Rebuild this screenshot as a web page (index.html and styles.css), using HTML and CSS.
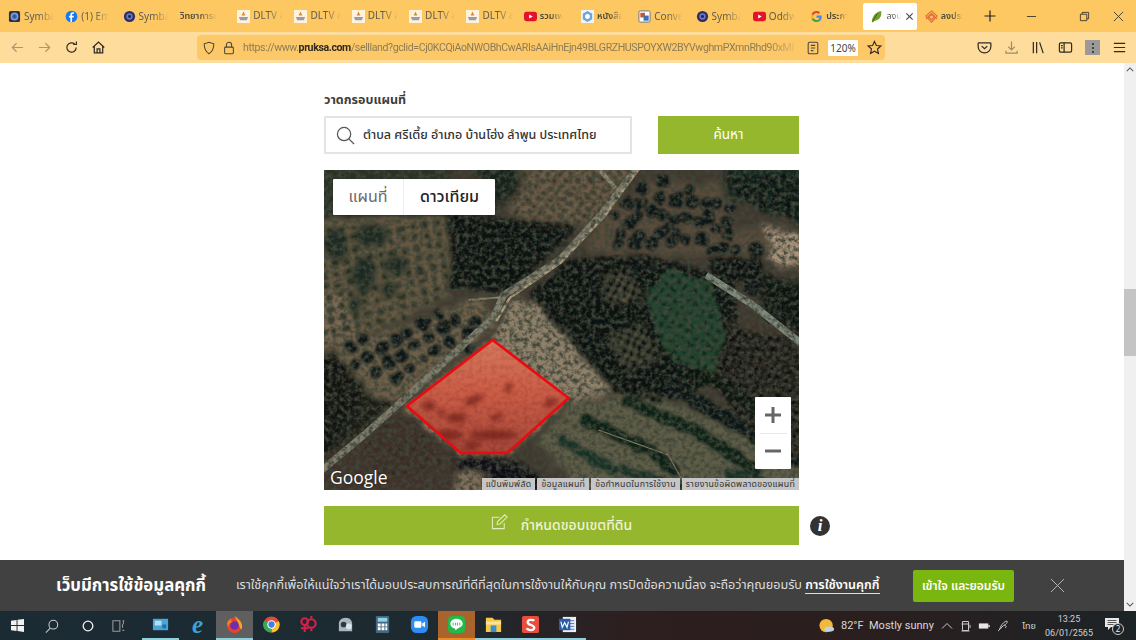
FILE: index.html
```html
<!DOCTYPE html>
<html lang="th">
<head>
<meta charset="utf-8">
<title>ลงประกาศขายที่ดิน</title>
<link rel="stylesheet" href="styles.css">
</head>
<body>
<svg class="defs" width="0" height="0" aria-hidden="true">
  <defs>
    <symbol id="i-symbol" viewBox="0 0 14 14"><rect x="1" y="1" width="12" height="12" rx="2" fill="#26324f"/><circle cx="7" cy="7" r="4.2" fill="#7f9bd8"/><circle cx="7" cy="7" r="2.4" fill="#3d5796"/></symbol>
    <symbol id="i-dark" viewBox="0 0 14 14"><circle cx="7" cy="7" r="6" fill="#2b2f63"/><circle cx="7" cy="7" r="3.4" fill="#6f76c4"/><circle cx="7" cy="7" r="1.6" fill="#1d2150"/></symbol>
    <symbol id="i-dltv" viewBox="0 0 14 14"><rect width="14" height="14" fill="#fff3dc"/><path d="M7 1.5 9 6H5z" fill="#d9883c"/><path d="M2 7.5h10L10.5 11h-7z" fill="#9c9ab0"/></symbol>
    <symbol id="i-yt" viewBox="0 0 14 14"><rect y="2" width="14" height="10" rx="2.6" fill="#e2132a"/><path d="M5.6 4.8 9.4 7l-3.8 2.2z" fill="#fff"/></symbol>
  </defs>
</svg>

<div class="app">
  <header class="tabbar">
    <div class="tab"><svg class="fav"><use href="#i-symbol"/></svg><span class="tab-label">Symba</span></div>
    <div class="tab"><svg class="fav" viewBox="0 0 14 14"><circle cx="7" cy="7" r="6.3" fill="#1877f2"/><path d="M7.6 13V8h1.6l.3-1.9H7.6V5c0-.6.3-1 1-1h1V2.400C9.300 2.300 8.800 2.300 8.300 2.300 6.800 2.300 5.800 3.200 5.800 4.800v1.300H4.200V8h1.600v5z" fill="#fff"/></svg><span class="tab-label">(1) Em</span></div>
    <div class="tab"><svg class="fav"><use href="#i-dark"/></svg><span class="tab-label">Symba</span></div>
    <div class="tab"><span class="tab-label tab-label-thai">วิทยาการค</span></div>
    <div class="tab"><svg class="fav"><use href="#i-dltv"/></svg><span class="tab-label">DLTV ส</span></div>
    <div class="tab"><svg class="fav"><use href="#i-dltv"/></svg><span class="tab-label">DLTV ส</span></div>
    <div class="tab"><svg class="fav"><use href="#i-dltv"/></svg><span class="tab-label">DLTV ส</span></div>
    <div class="tab"><svg class="fav"><use href="#i-dltv"/></svg><span class="tab-label">DLTV ส</span></div>
    <div class="tab"><svg class="fav"><use href="#i-dltv"/></svg><span class="tab-label">DLTV ส</span></div>
    <div class="tab"><svg class="fav"><use href="#i-yt"/></svg><span class="tab-label tab-label-thai">รวมเพ</span></div>
    <div class="tab"><svg class="fav" viewBox="0 0 14 14"><rect width="14" height="14" fill="#eef3fb"/><path d="M7 1 12 4v6l-5 3-5-3V4z" fill="#6ea2d8"/><path d="M7 4 9.500 5.500v3L7 10 4.500 8.500v-3z" fill="#fff"/></svg><span class="tab-label tab-label-thai">หนังสือ</span></div>
    <div class="tab"><svg class="fav" viewBox="0 0 14 14"><rect x="1" y="1" width="12" height="12" rx="1.500" fill="#fff" stroke="#5c6f8f"/><rect x="2.500" y="3" width="5" height="5" fill="#c2553c"/><rect x="6" y="6" width="5.500" height="5.500" fill="#3f6fb0"/></svg><span class="tab-label">Conve</span></div>
    <div class="tab"><svg class="fav"><use href="#i-dark"/></svg><span class="tab-label">Symba</span></div>
    <div class="tab"><svg class="fav"><use href="#i-yt"/></svg><span class="tab-label">Oddw</span></div>
    <div class="tab"><svg class="fav" viewBox="0 0 14 14"><path d="M12.600 7.200c0-.5 0-.9-.1-1.300H7v2.500h3.200a2.800 2.800 0 0 1-1.200 1.800l1.900 1.500c1.100-1 1.700-2.500 1.700-4.500z" fill="#4285f4"/><path d="M7 13c1.600 0 2.900-.5 3.900-1.400L9 10.200c-.5.4-1.200.6-2 .6-1.500 0-2.800-1-3.300-2.400l-2 1.500C2.700 11.800 4.700 13 7 13z" fill="#34a853"/><path d="M3.700 8.400a3.700 3.700 0 0 1 0-2.400l-2-1.600a6 6 0 0 0 0 5.500z" fill="#fbbc05"/><path d="M7 3.300c.9 0 1.600.3 2.200.9l1.700-1.700A5.900 5.900 0 0 0 1.700 4.400l2 1.600C4.200 4.400 5.500 3.300 7 3.300z" fill="#ea4335"/></svg><span class="tab-label tab-label-thai">ประกา</span></div>
    <div class="tab tab-active"><svg class="fav" viewBox="0 0 14 14"><path d="M2 13C2 7 6 2 12 1c1 6-2 10-7 10.500L3 13.500z" fill="#6f9e2b"/><path d="M8 4 3 12" stroke="#2f5a13" stroke-width=".9"/></svg><span class="tab-label tab-label-thai">ลงป</span><svg class="tab-close" viewBox="0 0 10 10"><path d="M1.500 1.500 8.500 8.500M8.500 1.500 1.500 8.500"/></svg></div>
    <div class="tab"><svg class="fav" viewBox="0 0 14 14" fill="none" stroke="#e2693a" stroke-width="1.200"><path d="M7 1 13 6.500 7 13 1 6.500z"/><path d="M7 3.800 10.500 7 7 10.500 3.500 7z"/><path d="M1 9.500 7 5l6 4.500"/></svg><span class="tab-label tab-label-thai">ลงประ</span></div>
    <svg class="new-tab" viewBox="0 0 12 12"><path d="M6 .5v11M.5 6h11"/></svg>
    <div class="win-controls">
      <svg class="win-btn win-min" viewBox="0 0 12 12"><path d="M1 6h10"/></svg>
      <svg class="win-btn win-max" viewBox="0 0 12 12"><path d="M1.500 3.500h7v7h-7zM3.500 3.500v-2h7v7h-2"/></svg>
      <svg class="win-btn" viewBox="0 0 12 12"><path d="M1 1l10 10M11 1 1 11"/></svg>
    </div>
  </header>

  <nav class="toolbar">
    <div class="nav-buttons">
      <svg class="tool tool-faded" viewBox="0 0 16 16"><path d="M14 8H2.500M7 3.500 2.500 8 7 12.500"/></svg>
      <svg class="tool tool-faded" viewBox="0 0 16 16"><path d="M2 8h11.500M9 3.500 13.500 8 9 12.500"/></svg>
      <svg class="tool" viewBox="0 0 16 16"><path d="M13 8a5 5 0 1 1-1.600-3.700M13.200 1.500v3.300H9.900"/></svg>
      <svg class="tool" viewBox="0 0 16 16"><path d="M1.800 8 8 2.200 14.200 8M3.500 7v6.800h9V7M6.500 13.800V9.500h3v4.300"/></svg>
    </div>
    <div class="urlbar">
      <svg class="url-icon" viewBox="0 0 16 16"><path d="M8 1.500 13.500 3.200c0 5-1.500 9-5.500 11.300C4 12.200 2.500 8.200 2.500 3.200z"/></svg>
      <svg class="url-icon url-lock" viewBox="0 0 16 16"><rect x="3" y="7" width="10" height="7.500" rx="1"/><path d="M5 7V4.500a3 3 0 0 1 6 0V7"/></svg>
      <div class="url-text"><span>https://www.</span><b>pruksa.com</b><span>/sellland?gclid=Cj0KCQiAoNWOBhCwARIsAAiHnEjn49BLGRZHUSPOYXW2BYVwghmPXmnRhd90xMI</span></div>
      <svg class="url-icon url-reader" viewBox="0 0 16 16"><rect x="2.500" y="1.500" width="11" height="13" rx="1.500"/><path d="M5.500 5h5M5.500 8h5M5.500 11h3"/></svg>
      <span class="zoom-badge">120%</span>
      <svg class="url-icon url-star" viewBox="0 0 16 16"><path d="M8 1.500 10 5.900l4.700.5-3.500 3.200 1 4.700L8 11.900l-4.200 2.400 1-4.700L1.300 6.400 6 5.900z"/></svg>
    </div>
    <div class="tool-right">
      <svg class="tool" viewBox="0 0 16 16"><path d="M2 3h12a.8.800 0 0 1 .8.800V7A6.800 6.800 0 0 1 1.200 7V3.800A.8.800 0 0 1 2 3zM5 6.500 8 9.300l3-2.800"/></svg>
      <svg class="tool tool-soft" viewBox="0 0 16 16"><path d="M8 1.500v9M4.500 7 8 10.500 11.500 7M2 11.500v2.500h12v-2.500"/></svg>
      <svg class="tool" viewBox="0 0 16 16"><path d="M2.500 2v12M6 2v12M9.200 2.500l3.800 11.500"/></svg>
      <svg class="tool" viewBox="0 0 16 16"><rect x="1.500" y="3" width="13" height="10" rx="1.500"/><path d="M6.500 3v10M3.200 6h1.800M3.200 8.500h1.800"/></svg>
      <div class="ext-btn"><span class="ext-dots"></span></div>
      <svg class="tool" viewBox="0 0 16 16"><path d="M2 3.500h12M2 8h12M2 12.500h12"/></svg>
    </div>
  </nav>

  <div class="viewport">
    <div class="page-col">
      <main class="page">
        <section class="form">
          <h2 class="form-title">วาดกรอบแผนที่</h2>
          <div class="search-row">
            <div class="search-box">
              <svg class="search-icon" viewBox="0 0 20 20"><circle cx="8.500" cy="8.500" r="7"/><path d="M13.500 13.500 19 19"/></svg>
              <span class="search-text">ตำบล ศรีเตี้ย อำเภอ บ้านโฮ่ง ลำพูน ประเทศไทย</span>
            </div>
            <button class="btn-search">ค้นหา</button>
          </div>

          <div class="map">
            <svg class="map-art" viewBox="0 0 476 320" preserveAspectRatio="none">
              <defs>
                <filter id="ground" x="-5%" y="-5%" width="110%" height="110%">
                  <feGaussianBlur stdDeviation="3" result="b"/>
                  <feTurbulence type="fractalNoise" baseFrequency=".06" numOctaves="3" seed="7" result="n"/>
                  <feDisplacementMap in="b" in2="n" scale="14" xChannelSelector="R" yChannelSelector="G"/>
                </filter>
                <filter id="canopy" x="-5%" y="-5%" width="110%" height="110%">
                  <feTurbulence type="fractalNoise" baseFrequency=".09" numOctaves="2" seed="3" result="n"/>
                  <feDisplacementMap in="SourceGraphic" in2="n" scale="8" xChannelSelector="R" yChannelSelector="G"/>
                  <feGaussianBlur stdDeviation=".8"/>
                </filter>
                <filter id="patch" x="-20%" y="-20%" width="140%" height="140%">
                  <feGaussianBlur stdDeviation="2.500"/>
                </filter>
                <filter id="blur1" x="-10%" y="-10%" width="120%" height="120%"><feGaussianBlur stdDeviation=".6"/></filter>
                <filter id="grain" x="0" y="0" width="100%" height="100%">
                  <feTurbulence type="fractalNoise" baseFrequency=".22" numOctaves="3" seed="11"/>
                  <feColorMatrix values="0 0 0 0 .05  0 0 0 0 .06  0 0 0 0 .04  2.600 0 0 0 -1"/>
                </filter>
                <clipPath id="parcel-clip"><polygon points="169,170 245,228 184,283 137,283 83,236"/></clipPath>
                <linearGradient id="parcel-shade" x1="0" y1="0" x2="0" y2="1">
                  <stop offset="0" stop-color="#e2765a"/>
                  <stop offset=".45" stop-color="#d4543f"/>
                  <stop offset="1" stop-color="#a73a30"/>
                </linearGradient>
                <pattern id="orchard" width="12" height="11" patternUnits="userSpaceOnUse" patternTransform="rotate(-10)">
                  <circle cx="6" cy="5.500" r="3" fill="#262d20"/>
                </pattern>
                <pattern id="forest" width="8" height="8" patternUnits="userSpaceOnUse" patternTransform="rotate(25)">
                  <circle cx="4" cy="4" r="3.400" fill="#0a110e"/>
                </pattern>
                <pattern id="speck" width="9" height="8" patternUnits="userSpaceOnUse" patternTransform="rotate(40)">
                  <circle cx="4" cy="4" r="2" fill="#2d261c"/>
                </pattern>
                <pattern id="treesG" width="9" height="9" patternUnits="userSpaceOnUse" patternTransform="rotate(35)">
                  <circle cx="4.500" cy="4.500" r="2.800" fill="#112a1d"/>
                </pattern>
              </defs>

              <g filter="url(#ground)">
                <rect x="-20" y="-20" width="516" height="360" fill="#3f382d"/>
                <path d="M-20-20 130-20 125 45 20 45-20 60z" fill="#2a3326"/>
                <path d="M-20 50 125 45 125 125 70 155 30 168-20 170z" fill="#665842"/>
                <path d="M-20 115 25 130 30 168-20 175z" fill="#7d6a55"/>
                <path d="M185-20 320-20 285 40 255 58 190 48z" fill="#6d5d49"/>
                <path d="M150-20 200-20 198 25 160 42z" fill="#18231d"/>
                <path d="M125 45 255 55 190 122 128 118z" fill="#101915"/>
                <path d="M-20 175 60 165 160 125 172 155 85 225 50 240-20 205z" fill="#6e5f4a"/>
                <path d="M-20 185 10 180 45 222 75 232 0 292-20 300z" fill="#1e1e18"/>
                <path d="M-20 300 85 240 135 285 150 340-20 340z" fill="#40332b"/>
                <path d="M130 285 190 290 265 340 140 340z" fill="#0b1013"/>
                <path d="M135 302 158 302 160 335 128 335z" fill="#836f5c"/>
                <path d="M185 135 215 128 295 220 248 232 170 170z" fill="#8f806a"/>
                <path d="M170 170 245 228 184 283 137 283 83 236z" fill="#a48a6c"/>
                <path d="M205 125 245 90 320 85 410 110 420 195 380 215 335 235 290 220z" fill="#0f1713"/>
                <path d="M280 45 330 10 400 15 410 60 445 60 440 100 390 85 300 85 260 80z" fill="#5a4c3b"/>
                <path d="M400-20 496-20 496 55 440 42 400 25z" fill="#172a20"/>
                <path d="M440 58 496 65 496 105 450 90z" fill="#a8937a"/>
                <path d="M386 87 440 87 440 113 392 108z" fill="#0e1412"/>
                <path d="M437 103 496 120 496 165 440 150z" fill="#0e1a14"/>
                <path d="M400 150 496 165 496 300 420 260 385 210z" fill="#3f342b"/>
                <path d="M248 232 330 225 470 285 490 340 270 340 215 270z" fill="#5f5d47"/>
                <path d="M278 105 305 100 320 132 285 130z" fill="#776953"/>
                <path d="M285 162 320 158 335 188 300 198z" fill="#68634c"/>
              </g>

              <g filter="url(#canopy)">
                <path d="M-5 60 125 45 125 125 70 155 30 168-5 170z" fill="url(#orchard)"/>
                <g fill="#15261c" filter="url(#patch)" opacity=".9">
                  <ellipse cx="12" cy="75" rx="12" ry="16"/>
                  <ellipse cx="47" cy="65" rx="17" ry="11"/>
                  <ellipse cx="40" cy="105" rx="12" ry="19"/>
                  <ellipse cx="72" cy="95" rx="12" ry="9"/>
                  <ellipse cx="65" cy="120" rx="8" ry="8"/>
                  <ellipse cx="32" cy="135" rx="6" ry="9"/>
                </g>
                <path d="M190-5 315-5 285 40 255 58 190 48z" fill="url(#speck)"/>
                <path d="M125 45 255 55 190 122 128 118z" fill="url(#forest)"/>
                <path d="M205 125 245 90 320 85 410 110 420 195 380 215 335 235 290 220z" fill="url(#forest)"/>
                <path d="M400 155 480 170 480 295 420 260 390 210z" fill="url(#forest)"/>
                <path d="M-5 190 10 185 40 222 0 285-5 285z" fill="url(#forest)"/>
                <path d="M30 258 85 245 120 290 60 315z" fill="url(#speck)"/>
                <path d="M322 125 345 98 388 112 402 165 390 203 352 192 332 160z" fill="#23452f"/>
                <path d="M322 125 345 98 388 112 402 165 390 203 352 192 332 160z" fill="url(#treesG)"/>
                <path d="M405 5 476 5 476 50 440 40 405 22z" fill="url(#forest)"/>
                <path d="M437 105 480 120 480 165 442 150z" fill="url(#forest)"/>
                <path d="M386 88 438 90 438 112 392 108z" fill="url(#forest)"/>

                <g fill="#0c1214">
                  <circle cx="43" cy="187" r="6.500"/><circle cx="65" cy="192" r="7.500"/><circle cx="52" cy="202" r="6"/>
                  <circle cx="72" cy="208" r="6.500"/><circle cx="86" cy="198" r="6.500"/><circle cx="78" cy="185" r="6"/>
                  <circle cx="58" cy="178" r="7"/><circle cx="72" cy="170" r="6.500"/><circle cx="83" cy="162" r="6"/>
                  <circle cx="99" cy="154" r="7"/><circle cx="120" cy="158" r="7.500"/><circle cx="105" cy="167" r="6"/>
                  <circle cx="127" cy="172" r="6.500"/><circle cx="143" cy="163" r="7"/><circle cx="112" cy="180" r="6"/>
                  <circle cx="100" cy="188" r="5"/><circle cx="132" cy="150" r="6.500"/><circle cx="153" cy="153" r="7"/>
                  <circle cx="31" cy="195" r="5.500"/><circle cx="27" cy="177" r="6"/><circle cx="145" cy="178" r="5"/>
                  <circle cx="90" cy="175" r="5"/><circle cx="115" cy="145" r="5"/><circle cx="40" cy="170" r="5"/>
                  <circle cx="306" cy="53" r="7"/><circle cx="298" cy="65" r="6"/><circle cx="316" cy="65" r="6.500"/>
                  <circle cx="294" cy="74" r="5"/><circle cx="311" cy="75" r="6.500"/><circle cx="328" cy="73" r="7"/>
                  <circle cx="336" cy="63" r="6.500"/><circle cx="353" cy="30" r="8.500"/><circle cx="369" cy="31" r="6"/>
                  <circle cx="383" cy="35" r="7"/><circle cx="393" cy="33" r="5.500"/><circle cx="408" cy="38" r="5.500"/>
                  <circle cx="314" cy="45" r="6.500"/><circle cx="339" cy="45" r="6.500"/><circle cx="351" cy="50" r="6"/>
                  <circle cx="363" cy="48" r="6.500"/><circle cx="376" cy="52" r="6.500"/><circle cx="386" cy="47" r="6.500"/>
                  <circle cx="403" cy="53" r="6"/><circle cx="392" cy="59" r="5"/><circle cx="404" cy="65" r="6"/>
                  <circle cx="353" cy="62" r="5.500"/><circle cx="344" cy="58" r="6"/><circle cx="348" cy="72" r="6"/>
                  <circle cx="304" cy="33" r="6.500"/><circle cx="318" cy="33" r="6"/><circle cx="329" cy="42" r="6.500"/>
                  <circle cx="336" cy="28" r="6"/><circle cx="366" cy="20" r="6"/><circle cx="433" cy="80" r="8"/>
                  <circle cx="429" cy="117" r="9"/><circle cx="413" cy="80" r="5.500"/><circle cx="399" cy="78" r="5.500"/>
                  <circle cx="389" cy="80" r="5.500"/><circle cx="320" cy="18" r="7"/><circle cx="340" cy="12" r="7"/>
                  <circle cx="362" cy="70" r="6"/><circle cx="378" cy="68" r="6"/><circle cx="290" cy="45" r="5"/>
                </g>

                <g fill="none" stroke-linecap="round" stroke-dasharray="7 2">
                  <path d="M262 250 330 282 352 302" stroke="#0f2219" stroke-width="12"/>
                  <path d="M305 232 375 262 432 300" stroke="#0f2219" stroke-width="13"/>
                  <path d="M345 215 420 258 470 290" stroke="#0b1813" stroke-width="14"/>
                  <path d="M380 205 460 255" stroke="#0a1611" stroke-width="13"/>
                  <path d="M238 270 290 300" stroke="#163326" stroke-width="10"/>
                  <path d="M405 303 450 315" stroke="#163326" stroke-width="10"/>
                  <path d="M300 300 370 320" stroke="#163326" stroke-width="8"/>
                </g>
              </g>

              <g filter="url(#blur1)" fill="none">
                <path d="M275 260 345 285 360 312" stroke="#8f8268" stroke-width="1.300"/>
                <path d="M316-5 279 43 236 90 180 125 170 147 85 225 40 265-8 305" stroke="#7f7d6c" stroke-width="7"/>
                <path d="M318-5 282 45 238 92 186 128 172 152" stroke="#ab9a7c" stroke-width="2.500"/>
                <path d="M272-5 292 18" stroke="#8d8672" stroke-width="4"/>
                <path d="M145 130 180 127" stroke="#8e8570" stroke-width="2"/>
                <path d="M383 105 430 135 480 175" stroke="#7f8a7b" stroke-width="7"/>
              </g>
              <rect width="476" height="320" filter="url(#grain)"/>

              <g clip-path="url(#parcel-clip)">
                <polygon class="parcel-fill" fill="url(#parcel-shade)" points="169,170 245,228 184,283 137,283 83,236"/>
                <g fill="#6d1c15" filter="url(#patch)" opacity=".7">
                  <ellipse cx="105" cy="236" rx="7" ry="5"/>
                  <ellipse cx="150" cy="230" rx="10" ry="4" transform="rotate(-25 150 230)"/>
                  <ellipse cx="185" cy="218" rx="3" ry="6"/>
                  <ellipse cx="227" cy="233" rx="7" ry="4" transform="rotate(-30 227 233)"/>
                  <ellipse cx="133" cy="248" rx="10" ry="5"/>
                  <ellipse cx="173" cy="247" rx="7" ry="3" transform="rotate(-25 173 247)"/>
                  <ellipse cx="118" cy="243" rx="3" ry="4"/>
                  <ellipse cx="170" cy="265" rx="24" ry="5"/>
                  <ellipse cx="148" cy="275" rx="8" ry="4"/>
                  <ellipse cx="125" cy="265" rx="14" ry="5"/>
                </g>
              </g>
              <polygon class="parcel-line" points="169,170 245,228 184,283 137,283 83,236"/>
            </svg>

            <div class="map-type">
              <span class="map-type-btn">แผนที่</span>
              <span class="map-type-btn map-type-on">ดาวเทียม</span>
            </div>
            <div class="zoom-ctl">
              <svg class="zoom-sign" viewBox="0 0 16 16"><path d="M8 0v16M0 8h16"/></svg>
              <span class="zoom-sep"></span>
              <svg class="zoom-sign" viewBox="0 0 16 16"><path d="M0 8h16"/></svg>
            </div>
            <span class="google">Google</span>
            <div class="attrib">
              <span>แป้นพิมพ์ลัด</span><span>ข้อมูลแผนที่</span><span>ข้อกำหนดในการใช้งาน</span><span>รายงานข้อผิดพลาดของแผนที่</span>
            </div>
          </div>

          <div class="define-row">
            <button class="btn-define">
              <svg class="define-icon" viewBox="0 0 18 18"><path d="M14 9.500V15.500H1.500V3.500H9M6.500 11 7 8 14.500 .800 17 3.200 9.500 10.500z"/></svg>
              <span>กำหนดขอบเขตที่ดิน</span>
            </button>
            <span class="info-dot">i</span>
          </div>
        </section>
      </main>

      <aside class="cookie">
        <strong class="cookie-title">เว็บมีการใช้ข้อมูลคุกกี้</strong>
        <p class="cookie-text">เราใช้คุกกี้เพื่อให้แน่ใจว่าเราได้มอบประสบการณ์ที่ดีที่สุดในการใช้งานให้กับคุณ การปิดข้อความนี้ลง จะถือว่าคุณยอมรับ <a class="cookie-link">การใช้งานคุกกี้</a></p>
        <button class="cookie-btn">เข้าใจ และยอมรับ</button>
        <svg class="cookie-x" viewBox="0 0 16 16"><path d="M1 1l14 14M15 1 1 15"/></svg>
      </aside>
    </div>
    <div class="scrollbar">
      <svg class="sb-arrow" viewBox="0 0 10 6"><path d="M1 5 5 1l4 4"/></svg>
      <div class="sb-track"><div class="sb-thumb"></div></div>
      <svg class="sb-arrow" viewBox="0 0 10 6"><path d="M1 1l4 4 4-4"/></svg>
    </div>
  </div>

  <footer class="taskbar">
    <svg class="win-logo" viewBox="0 0 14 14"><path d="M0 2 6 1v5.500H0zM7 .8 14 0v6.500H7zM0 7.500h6V13L0 12zM7 7.500h7V14l-7-1z"/></svg>
    <svg class="task-sys task-search" viewBox="0 0 16 16"><circle cx="9.500" cy="6.500" r="5"/><path d="M6 10.500 1 15.500"/></svg>
    <svg class="task-sys task-cortana" viewBox="0 0 16 16"><circle cx="8" cy="8" r="5.500"/></svg>
    <svg class="task-sys task-view" viewBox="0 0 16 16"><path d="M1 2h8v12H1zM12 2h2M12 6v4M12 13h2M13 2v4"/></svg>

    <div class="task-apps">
      <div class="app-slot slot-run"><svg class="app-ico" viewBox="0 0 20 20"><rect x="2" y="4" width="16" height="12" fill="#4aa6d6"/><rect x="4" y="6" width="7" height="5" fill="#b5e0f2"/><rect x="12" y="10" width="4" height="4" fill="#1f6fa8"/></svg></div>
      <div class="app-slot"><span class="ie-e">e</span></div>
      <div class="app-slot slot-hover slot-run"><svg class="app-ico" viewBox="0 0 20 20"><circle cx="10" cy="11" r="8" fill="#e5432f"/><circle cx="10" cy="11" r="4.500" fill="#6d2fb0"/><path d="M10 1c3 2 8 6 8 11s-2 3-3-1-3-6-5-10z" fill="#f9a825"/><path d="M2 9c1-3 3-5 5-5-1 2-1 3 1 4-3 0-4 2-4 4-1-1-2-2-2-3z" fill="#f77b22"/></svg></div>
      <div class="app-slot"><svg class="app-ico" viewBox="0 0 20 20"><circle cx="10" cy="10" r="8.500" fill="#e24a3b"/><path d="M10 10 17.800 6.500A8.500 8.500 0 0 1 10 18.500z" fill="#f8c22e"/><path d="M10 10 10 18.500A8.500 8.500 0 0 1 2.200 6z" fill="#3aa757"/><circle cx="10" cy="10" r="4.500" fill="#fff"/><circle cx="10" cy="10" r="3.300" fill="#3e82e8"/></svg></div>
      <div class="app-slot"><svg class="app-ico" viewBox="0 0 20 20" fill="none" stroke="#d81f4a" stroke-width="2.200"><circle cx="6" cy="7" r="3.500"/><path d="M6 11v7M2 14h8"/><circle cx="13" cy="9" r="4.500"/><path d="M13 1v3M13 14v3M18 9h-1"/></svg></div>
      <div class="app-slot"><svg class="app-ico" viewBox="0 0 20 20"><path d="M3 17V9c0-3 3-6 7-6 5 0 7 3 7 7v7z" fill="#a9b6c0"/><circle cx="8" cy="10" r="3" fill="#2b3a46"/><circle cx="13.500" cy="12" r="3" fill="#dce5ea"/></svg></div>
      <div class="app-slot"><svg class="app-ico" viewBox="0 0 20 20"><rect x="3" y="1" width="14" height="18" rx="1" fill="#46677d"/><rect x="5" y="3" width="10" height="4" fill="#8fd3e8"/><path d="M5 9h3v3H5zM9 9h3v3H9zM13 9h2v3h-2zM5 13h3v3H5zM9 13h3v3H9zM13 13h2v3h-2z" fill="#fff"/></svg></div>
      <div class="app-slot"><svg class="app-ico" viewBox="0 0 20 20"><rect x="1" y="1" width="18" height="18" rx="6" fill="#2f8cf2"/><rect x="4.500" y="6.500" width="7.500" height="7" rx="1.500" fill="#fff"/><path d="m12.800 9 3-2v6l-3-2z" fill="#fff"/></svg></div>
      <div class="app-slot slot-line"><svg class="app-ico" viewBox="0 0 20 20"><rect x="1" y="1" width="18" height="18" rx="4.500" fill="#22b94a"/><path d="M10 4c-3.800 0-6.500 2.300-6.500 5.200 0 2.500 2 4.500 5 5l.300 1.800L12 13.800c2.700-1 4.500-2.500 4.500-4.600C16.500 6.300 13.800 4 10 4z" fill="#fff"/><path d="M6.500 8v3M9 8v3M11 8v3M13.500 8v3" stroke="#22b94a" stroke-width=".9"/></svg></div>
      <div class="app-slot slot-run"><svg class="app-ico" viewBox="0 0 20 20"><path d="M2 3h7l2 2h7v13H2z" fill="#f6c94c"/><rect x="2" y="7" width="16" height="3" fill="#fbe39a"/><rect x="7" y="11" width="6" height="7" fill="#3d8fc9"/></svg></div>
      <div class="app-slot slot-run"><svg class="app-ico" viewBox="0 0 20 20"><rect x="1" y="1" width="18" height="18" rx="2" fill="#e84d3d"/><path d="M14 6c-1-1-7-2-7 1.500S14 10 14 13.500 7 16 6 14" fill="none" stroke="#fff" stroke-width="2.400"/></svg></div>
      <div class="app-slot slot-run"><svg class="app-ico" viewBox="0 0 20 20"><rect x="5" y="2" width="14" height="16" fill="#e8eef8"/><path d="M10 6h7M10 9h7M10 12h7M10 15h7" stroke="#4a77b8"/><rect x="1" y="4" width="12" height="12" fill="#2a5aa8"/><path d="m3 7 1.500 6L7 8l2.500 5L11 7" fill="none" stroke="#fff" stroke-width="1.200"/></svg></div>
    </div>

    <div class="tray">
      <svg class="weather" viewBox="0 0 18 18"><circle cx="8" cy="8.500" r="7.500" fill="#f4b93a"/><ellipse cx="11.500" cy="12.500" rx="5.500" ry="3" fill="#bcd4e4"/></svg>
      <span class="weather-text">82°F&nbsp; Mostly sunny</span>
      <svg class="tray-ico tray-chevron" viewBox="0 0 12 12"><path d="M1 8.500 6 3.500l5 5"/></svg>
      <svg class="tray-ico tray-cam" viewBox="0 0 12 12"><path d="M2.500 1.500h6v9h-6zM1.500 4h8M1.500 11h8M10 5v3"/></svg>
      <svg class="tray-ico tray-bat" viewBox="0 0 14 12"><rect x="1" y="3" width="11" height="6" fill="#e6e6e6" stroke="none"/><path d="M12 5h2v2h-2z" fill="#e6e6e6" stroke="none"/></svg>
      <svg class="tray-ico tray-pen" viewBox="0 0 12 12"><path d="M1 11c2-1 2-3 3-5s4-5 6-5c1 2-2 4-4 5s-2 4-4 3M7 5c2 0 3 2 1 3"/></svg>
      <span class="lang">ไทย</span>
      <div class="clock"><span>13:25</span><span>06/01/2565</span></div>
      <div class="notify">
        <svg class="notify-ico" viewBox="0 0 14 14"><path d="M0 1h14v9H6l-3 3v-3H0z"/><path class="notify-lines" d="M2.500 3.500h9M2.500 5.500h9M2.500 7.500h6"/></svg>
        <span class="notify-num">2</span>
      </div>
    </div>
  </footer>
</div>
</body>
</html>
```

FILE: styles.css
```css
* { box-sizing: border-box; }
html, body { margin: 0; height: 100%; overflow: hidden; }
body { font-family: "Noto Sans", "Noto Sans Thai", "Open Sans", "DejaVu Sans", sans-serif; }
.defs { position: absolute; }
svg { display: block; flex: none; }

.app { width: 1136px; height: 640px; display: flex; flex-direction: column; background: #fff; }

/* Tabs */
.tabbar { height: 32px; flex: none; display: flex; align-items: center; padding-left: 4px; background: #fdc862; }
.tab { width: 57.3px; height: 27px; flex: none; display: flex; align-items: center; gap: 3px; padding-left: 4px; }
.fav { width: 13px; height: 13px; }
.tab-label { font-size: 10px; color: #5e5a4e; white-space: nowrap; -webkit-mask-image: linear-gradient(90deg, #000 45%, transparent 95%); mask-image: linear-gradient(90deg, #000 45%, transparent 95%); }
.tab-label-thai { font-size: 9px; font-weight: 600; color: #4f4a3a; }
.tab-active { width: 54px; margin-right: 3.300px; background: #fff; border-radius: 2px; padding-left: 7px; justify-content: space-between; }
.tab-active .tab-label { color: #555; font-weight: 400; }
.tab-close { width: 9px; height: 9px; margin-right: 7px; fill: none; stroke: #444; stroke-width: 1.200; }
.new-tab { width: 12px; height: 12px; margin-left: 6px; fill: none; stroke: #222; stroke-width: 1.200; }
.win-controls { flex: 1; display: flex; justify-content: flex-end; padding-right: 12px; }
.win-btn { width: 11px; height: 11px; fill: none; stroke: #3f3a2f; stroke-width: 1; }
.win-min { margin-right: 42px; }
.win-max { margin-right: 23px; }

/* Toolbar */
.toolbar { height: 31px; flex: none; display: flex; align-items: center; background: #fedc9b; }
.nav-buttons { width: 197px; flex: none; display: flex; gap: 12px; padding-left: 10px; }
.tool { width: 15px; height: 15px; fill: none; stroke: #2e2b26; stroke-width: 1.300; }
.tool-faded { stroke: #a99877; }
.tool-soft { stroke: #9f8c62; }
.urlbar { width: 688px; height: 25px; flex: none; display: flex; align-items: center; padding-left: 5px; background: #fdc868; border-radius: 4px; }
.url-icon { width: 14px; height: 14px; fill: none; stroke: #4b473e; stroke-width: 1.200; }
.url-lock { margin-left: 6px; }
.url-text { width: 557px; margin-left: 7px; font: 10.600px Roboto, sans-serif; letter-spacing: -.4px; white-space: nowrap; color: #8c7c57; -webkit-mask-image: linear-gradient(90deg, #000 94%, transparent); mask-image: linear-gradient(90deg, #000 94%, transparent); }
.url-text b { color: #2f2b22; font-weight: 700; }
.url-reader { margin-left: 6px; }
.zoom-badge { width: 30px; height: 16px; margin-left: 8px; background: #fff; color: #444; font-size: 10px; line-height: 16px; text-align: center; border-radius: 1px; }
.url-star { margin-left: 9px; width: 15px; height: 15px; stroke: #2e2b26; }
.tool-right { flex: 1; display: flex; align-items: center; gap: 12px; padding-left: 92px; }
.ext-btn { width: 15px; height: 15px; display: flex; justify-content: center; align-items: center; background: #9b9a98; }
.ext-dots { width: 2px; height: 10px; background: repeating-linear-gradient(#46443f 0 2px, transparent 2px 4px); }

/* Page */
.viewport { flex: 1; min-height: 0; display: flex; }
.page-col { flex: 1; min-width: 0; display: flex; flex-direction: column; }
.page { flex: 1; min-height: 0; overflow: hidden; padding-left: 324px; background: #fff; }
.form { width: 475px; padding-top: 28px; }
.form-title { margin: 0 0 7px; height: 18px; font-size: 12.500px; line-height: 18px; font-weight: 700; color: #3d3d3d; }
.search-row { display: flex; justify-content: space-between; height: 38px; }
.search-box { width: 308px; display: flex; align-items: center; gap: 8px; padding-left: 10px; border: 2px solid #e4e4e4; background: #fff; }
.search-icon { width: 19px; height: 19px; fill: none; stroke: #555; stroke-width: 1.300; }
.search-text { font-size: 12.500px; font-weight: 500; color: #333; white-space: nowrap; }
.btn-search { width: 141px; border: 0; background: #95b72e; color: #fff; font: 400 13.500px "Noto Sans", "Noto Sans Thai", sans-serif; }

.map { position: relative; height: 320px; margin-top: 16px; overflow: hidden; background: #3f382d; }
.map-art { display: block; width: 475px; height: 320px; }
.parcel-fill { fill-opacity: .82; }
.parcel-line { fill: none; stroke: #e80c12; stroke-width: 2.700; stroke-linejoin: miter; }
.map-type { position: absolute; left: 9px; top: 9px; width: 162px; height: 36px; display: flex; background: #fff; border-radius: 1px; box-shadow: 0 1px 3px rgba(0,0,0,.3); }
.map-type-btn { display: flex; align-items: center; justify-content: center; font-size: 16px; color: #6a6a6a; width: 70px; }
.map-type-on { flex: 1; color: #222; font-weight: 500; border-left: 1px solid #eee; }
.zoom-ctl { position: absolute; left: 431px; top: 227px; width: 36px; height: 72px; display: flex; flex-direction: column; align-items: center; padding-top: 10px; background: #fff; border-radius: 1px; }
.zoom-sign { width: 16px; height: 16px; fill: none; stroke: #666; stroke-width: 3; }
.zoom-sep { width: 27px; height: 1px; margin: 10px 0 9px; background: #e8e8e8; }
.google { position: absolute; left: 6px; bottom: 2px; font: 500 17.500px/22px "Open Sans", sans-serif; color: #fff; text-shadow: 0 0 2px rgba(0,0,0,.5); }
.attrib { position: absolute; right: 0; bottom: 0; height: 12px; display: flex; gap: 2px; font-size: 8.800px; line-height: 12px; letter-spacing: .25px; color: #333; }
.attrib span { padding: 0 4px; background: #c6c6c6; white-space: nowrap; }

.define-row { position: relative; margin-top: 16px; }
.btn-define { width: 475px; height: 39px; display: flex; align-items: center; justify-content: center; gap: 13px; border: 0; background: #95b72e; color: #eef3d2; font: 500 14px "Noto Sans", "Noto Sans Thai", sans-serif; }
.define-icon { width: 17px; height: 17px; margin-bottom: 6px; fill: none; stroke: #e4ecbd; stroke-width: 1.100; }
.info-dot { position: absolute; left: 486px; top: 10px; width: 20px; height: 20px; border-radius: 50%; background: #333; color: #fff; font: italic 700 17px/20px "Liberation Serif", serif; text-align: center; }

/* Cookie bar */
.cookie { height: 51px; flex: none; display: flex; align-items: center; padding-left: 56px; background: #414141; color: #ddd; }
.cookie-title { width: 180px; flex: none; font-size: 16.800px; font-weight: 700; color: #fff; white-space: nowrap; }
.cookie-text { width: 677px; flex: none; margin: 0; font-size: 12.600px; white-space: nowrap; }
.cookie-link { color: #fff; font-weight: 600; border-bottom: 1px solid #ddd; }
.cookie-btn { width: 101px; height: 32px; flex: none; border: 0; border-radius: 2px; background: #7ab610; color: #fff; font: 600 12px "Noto Sans", "Noto Sans Thai", sans-serif; }
.cookie-x { width: 15px; height: 15px; margin-left: 36px; fill: none; stroke: #bbb; stroke-width: 1; }

.scrollbar { width: 12px; flex: none; display: flex; flex-direction: column; align-items: center; padding: 4px 0; background: #f0f0f0; }
.sb-arrow { width: 8px; height: 5px; fill: none; stroke: #555; stroke-width: 1.300; }
.sb-track { flex: 1; width: 100%; padding-top: 217px; }
.sb-thumb { height: 67px; background: #c4c4c4; }

/* Taskbar */
.taskbar { height: 29px; flex: none; display: flex; align-items: center; padding-left: 11px; color: #e8e8e8; background: linear-gradient(90deg, #1b2b34 0, #1d2a30 38%, #2d1f20 55%, #2b1e1e 75%, #1d2326 100%); }
.win-logo { width: 13px; height: 13px; fill: #f2f2f2; }
.task-sys { width: 14px; height: 14px; fill: none; stroke: #c8c8c8; stroke-width: 1.200; }
.task-search { margin-left: 21px; }
.task-cortana { margin-left: 22px; stroke: #f0f0f0; stroke-width: 1.500; }
.task-view { margin-left: 17px; stroke: #999; }
.task-apps { display: flex; align-self: stretch; margin-left: 16px; }
.app-slot { width: 37px; display: flex; align-items: center; justify-content: center; border-bottom: 2px solid transparent; }
.slot-run { border-bottom-color: #8fd0dc; }
.slot-hover { background: #5f5f5f; }
.slot-line { background: #a9642e; border-bottom-color: #f08a24; }
.app-ico { width: 19px; height: 19px; }
.ie-e { font: italic 700 25px/24px "Liberation Serif", serif; color: #38a3dc; }
.tray { flex: 1; display: flex; align-items: center; justify-content: flex-end; color: #d8d8d8; }
.weather { width: 16px; height: 16px; }
.weather-text { margin-left: 6px; width: 100px; font: 11px Roboto, sans-serif; white-space: nowrap; }
.tray-ico { width: 12px; height: 12px; margin-left: 6px; fill: none; stroke: #c8c8c8; stroke-width: 1; }
.tray-chevron { margin-left: 0; }
.tray-cam, .tray-pen { margin-left: 7px; }
.lang { width: 20px; margin-left: 10px; font-size: 9px; text-align: center; }
.clock { width: 60px; display: flex; flex-direction: column; align-items: center; font: 9px/14px Roboto, sans-serif; color: #d0d0d0; }
.notify { position: relative; width: 37px; height: 20px; }
.notify-ico { position: absolute; left: 6px; top: 1px; width: 14px; height: 14px; fill: #e8e8e8; stroke: none; }
.notify-lines { fill: none; stroke: #333; stroke-width: .8; }
.notify-num { position: absolute; left: 13px; top: 7px; width: 12px; height: 12px; border: 1px solid #ccc; border-radius: 50%; background: #222; color: #eee; font-size: 8px; line-height: 10px; text-align: center; }
```
